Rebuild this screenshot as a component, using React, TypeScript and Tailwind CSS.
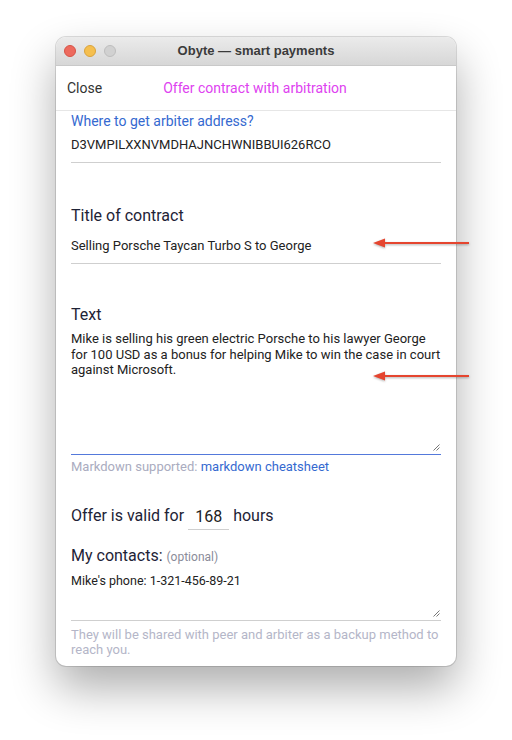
import React from "react";

function Grip() {
  return (
    <svg width="7" height="7" viewBox="0 0 7 7" className="absolute right-[1px] bottom-[3px]">
      <line x1="0.5" y1="6.5" x2="6.5" y2="0.5" stroke="#777" strokeWidth="1" />
      <line x1="3.5" y1="6.5" x2="6.5" y2="3.5" stroke="#777" strokeWidth="1" />
    </svg>
  );
}

function Arrow({ top }: { top: number }) {
  return (
    <svg
      width="104"
      height="16"
      viewBox="0 0 104 16"
      className="absolute left-[370px]"
      style={{ top, filter: "drop-shadow(0 1px 1px rgba(0,0,0,0.3))" }}
    >
      <line x1="12" y1="8" x2="99" y2="8" stroke="#e5452f" strokeWidth="2" />
      <polygon points="3,8 15,3.5 15,12.5" fill="#e5452f" />
    </svg>
  );
}

export default function App() {
  return (
    <div
      className="relative w-[512px] h-[740px] bg-white pt-[37px] pl-[56px]"
      style={{ fontFamily: "Roboto, 'Noto Sans', sans-serif" }}
    >
      <div className="w-[400px] h-[629px] rounded-[10px] overflow-hidden bg-white flex flex-col shadow-[0_22px_45px_rgba(0,0,0,0.32),0_0_0_1px_rgba(0,0,0,0.13)]">
        {/* title bar */}
        <div className="h-[29px] shrink-0 flex items-center bg-gradient-to-b from-[#ebebeb] to-[#d7d7d7] border-b border-[#c9c9c9]">
          <div className="w-[80px] flex items-center gap-[8px] pl-[8px]">
            <span className="w-[12px] h-[12px] rounded-full bg-[#ed6a5e] border border-[#d65346]" />
            <span className="w-[12px] h-[12px] rounded-full bg-[#f5bf4f] border border-[#d9a33c]" />
            <span className="w-[12px] h-[12px] rounded-full bg-[#d1d1d1] border border-[#bdbdbd]" />
          </div>
          <div className="flex-1 text-center text-[13px] font-bold text-[#3b3b3b]" style={{ fontFamily: "'Liberation Sans', Roboto, sans-serif" }}>
            Obyte — smart payments
          </div>
          <div className="w-[80px]" />
        </div>
        {/* header */}
        <div className="h-[45px] shrink-0 flex items-center pl-[11px] border-b border-[#e6e6e6] text-[14px]">
          <span className="text-[#333]">Close</span>
          <span className="ml-[61px] text-[#de42f0]">Offer contract with arbitration</span>
        </div>
        {/* content */}
        <div className="px-[15px] flex flex-col text-[#222]">
          <div className="text-[14px] leading-[20px] text-[#3569d0]">Where to get arbiter address?</div>
          <div className="pt-[5px] pb-[8px] border-b border-[#cfcfcf] text-[13px] leading-[18px]">
            D3VMPILXXNVMDHAJNCHWNIBBUI626RCO
          </div>

          <div className="mt-[42px] text-[16px] leading-[22px] text-[#1e2336]">Title of contract</div>
          <div className="mt-[10px] pb-[8px] border-b border-[#cfcfcf] text-[13px] leading-[18px]">
            Selling Porsche Taycan Turbo S to George
          </div>

          <div className="mt-[40px] text-[16px] leading-[22px] text-[#1e2336]">Text</div>
          <div className="relative mt-[5px] h-[124px] border-b border-[#5479db] text-[13px] leading-[15.5px]">
            Mike is selling his green electric Porsche to his lawyer George for 100 USD as a bonus for helping Mike to win the case in court against Microsoft.
            <Grip />
          </div>
          <div className="mt-[4px] text-[13px] leading-[16px] text-[#aaacc0]">
            Markdown supported: <span className="text-[#3569d0]">markdown cheatsheet</span>
          </div>

          <div className="mt-[30px] h-[25px] flex items-start text-[16px] leading-[22px] text-[#1e2336]">
            <span>Offer is valid for</span>
            <span className="ml-[4px] w-[41px] h-[25px] border-b border-[#cfcfcf] text-center text-[16px] leading-[24px] text-[#222]">168</span>
            <span className="ml-[4px]">hours</span>
          </div>

          <div className="mt-[15px] text-[16px] leading-[22px] text-[#1e2336]">
            My contacts: <span className="text-[12px] text-[#8a8c99]">(optional)</span>
          </div>
          <div className="relative mt-[5px] h-[48px] border-b border-[#cfcfcf] text-[12.5px] leading-[16px]">
            Mike's phone: 1-321-456-89-21
            <Grip />
          </div>
          <div className="mt-[6px] text-[13px] leading-[15px] text-[#b4b6c8]">
            They will be shared with peer and arbiter as a backup method to reach you.
          </div>
        </div>
      </div>
      <Arrow top={235} />
      <Arrow top={368} />
    </div>
  );
}
